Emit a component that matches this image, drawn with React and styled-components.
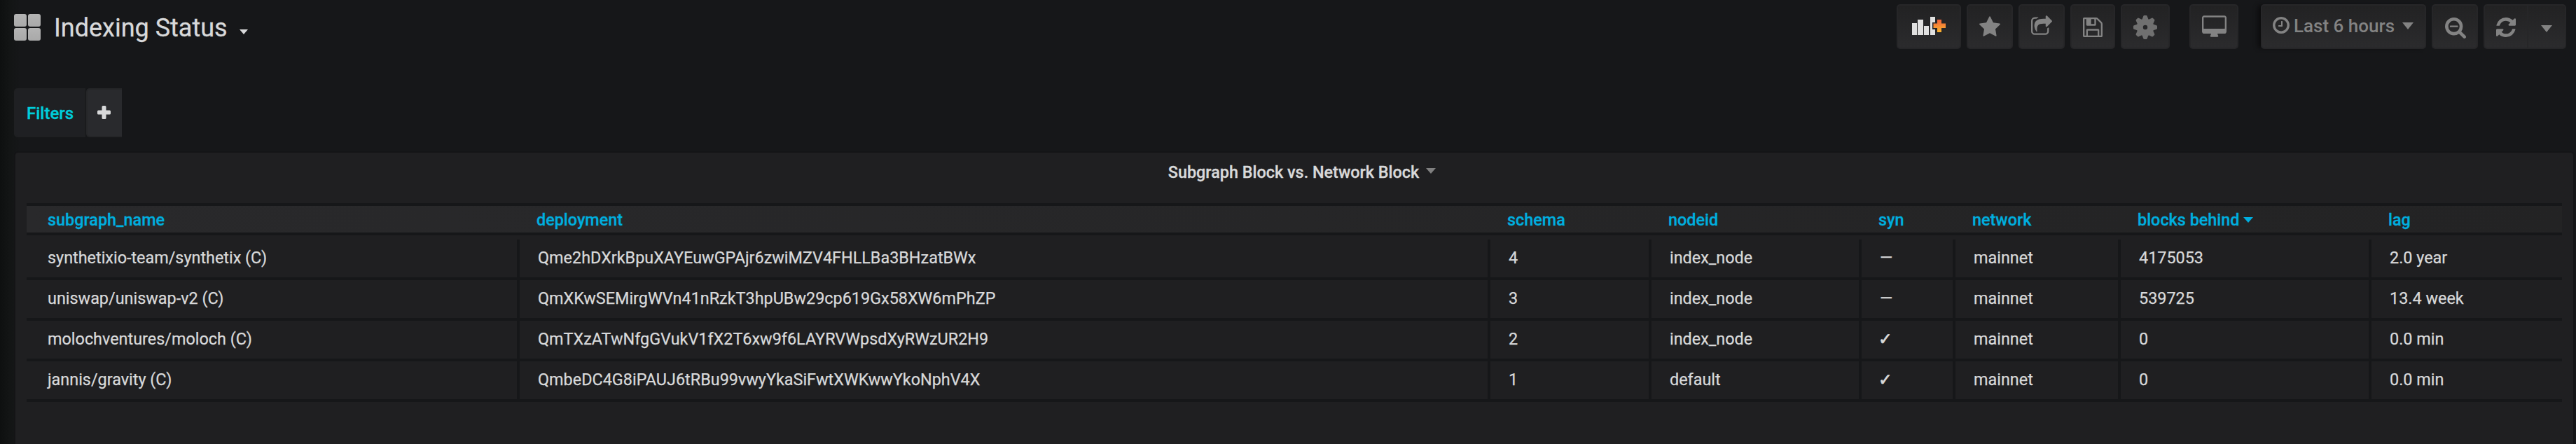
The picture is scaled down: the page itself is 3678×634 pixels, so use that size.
import React from "react";
import styled, { createGlobalStyle } from "styled-components";

const GlobalStyle = createGlobalStyle`
  *, *::before, *::after { box-sizing: border-box; }
  html, body { margin: 0; height: 100%; background: #161719; }
  #root { height: 100%; }
  body {
    font-family: Roboto, "Liberation Sans", sans-serif;
    font-size: 23.4px;
    color: #d8d9da;
    overflow: hidden;
  }
`;

const Page = styled.div`
  display: flex;
  flex-direction: column;
  height: 634px;
  overflow: hidden;
  background: linear-gradient(90deg, #0e1010 0, #131515 14px, #161719 30px);
`;

const Navbar = styled.header`
  display: flex;
  flex: none;
  align-items: flex-start;
  justify-content: space-between;
  height: 126px;
  padding: 6px 14px 0 20px;
`;

const TitleArea = styled.div`
  display: flex;
  align-items: center;
  padding-top: 4px;
`;

const Tiles = styled.div`
  display: grid;
  grid-template-columns: 18px 18px;
  grid-auto-rows: 18px;
  gap: 2px;
  margin-bottom: 2px;
`;

const Tile = styled.span`
  border-radius: 3px;
  background: linear-gradient(#b4b4b4, #a9a9a9);
`;

const Title = styled.h1`
  margin: 0 0 0 19px;
  font-size: 36px;
  line-height: 60px;
  font-weight: 400;
  white-space: nowrap;
  -webkit-text-stroke: 0.3px currentColor;
`;

const Caret = styled.i`
  flex: none;
  display: inline-block;
  width: 0;
  height: 0;
  margin: ${(p) => p.$m || "0"};
  border-style: solid;
  border-color: ${(p) => p.$color || "currentColor"} transparent transparent;
  border-width: ${(p) => p.$h}px ${(p) => p.$w / 2}px 0;
`;

const Toolbar = styled.div`
  display: flex;
  gap: 8px;
`;

const Button = styled.button`
  display: flex;
  align-items: flex-start;
  width: ${(p) => p.$w}px;
  height: 64px;
  margin: 0 0 0 ${(p) => p.$gap || 0}px;
  padding: ${(p) => p.$pad};
  border: 2px solid #262628;
  border-radius: ${(p) => p.$radius || "5px"};
  border-left-width: ${(p) => (p.$joined ? 0 : 2)}px;
  background: linear-gradient(#222223, #2b2b2d);
  box-shadow: ${(p) => (p.$shadow ? "-6px 0 6px -2px #0c0c0d" : "none")};
  color: #838383;
  font: 500 26px/26px Roboto, "Liberation Sans", sans-serif;
  white-space: nowrap;
`;

const ButtonGroup = styled.div`
  display: flex;
`;

const Glyph = styled.svg`
  flex: none;
  display: block;
  fill: ${(p) => p.$fill || "currentColor"};
`;

const TimeLabel = styled.span`
  margin: 0 11px 0 6px;
`;

const Filters = styled.div`
  display: flex;
  flex: none;
  gap: 1px;
  height: 70px;
  margin: 0 0 20px 20px;
`;

const FilterLabel = styled.div`
  width: 102px;
  padding: 0 0 0 16px;
  border: 2px solid #1f2022;
  border-radius: 5px 0 0 5px;
  background: #1f2023;
  color: #00cddb;
  font-size: 24px;
  line-height: 68px;
  font-weight: 500;
  -webkit-text-stroke: 0.3px currentColor;
`;

const AddFilter = styled.button`
  display: flex;
  align-items: flex-start;
  width: 51px;
  padding: 23px 0 0 14px;
  border: 2px solid #252628;
  border-right: 0;
  border-radius: 5px 0 0 5px;
  background: #292a2d;
  color: #d8d9da;
`;

const Panel = styled.section`
  flex: none;
  height: 430px;
  margin: 0 2px 0 20px;
  padding: 0 16px;
  border: 2px solid #141416;
  border-radius: 6px;
  background: #1f1f21;
`;

const PanelTitle = styled.h2`
  display: flex;
  justify-content: center;
  align-items: center;
  height: 56px;
  margin: 0 0 16px;
  padding-left: 22px;
  font-size: 23.4px;
  font-weight: 500;
  -webkit-text-stroke: 0.3px currentColor;
`;

const Row = styled.div`
  display: grid;
  grid-template-columns: 704px 1386px 230px 300px 134px 236px 358px 272px;
  border-bottom: 4px solid #161719;
`;

const HeadRow = styled(Row)`
  height: 46px;
  margin-bottom: 6px;
  border-top: 4px solid #161719;
  background: linear-gradient(90deg, #29292b, #232324);
`;

const HeadCell = styled.div`
  display: flex;
  align-items: center;
  padding: 1px 0 0 ${(p) => (p.$first ? 30 : 24)}px;
  color: #00aedf;
  font-weight: 500;
  -webkit-text-stroke: 0.3px currentColor;
`;

const Cell = styled.div`
  height: 54px;
  padding-left: ${(p) => (p.$first ? 30 : 26)}px;
  border-right: ${(p) => (p.$last ? 0 : 4)}px solid #161719;
  line-height: 53px;
  white-space: nowrap;
  -webkit-text-stroke: 0.25px currentColor;
`;

const Check = styled.span`
  margin-left: -2px;
  font-family: "DejaVu Sans", sans-serif;
  line-height: 1;
  -webkit-text-stroke: 0.8px currentColor;
`;

const ICONS = {
  star: ["64 32 1664 1587", "M1728 647q0 22-26 48l-363 354 86 500q1 7 1 20 0 21-10.5 35.5t-30.5 14.5q-19 0-40-12l-449-236-449 236q-22 12-40 12-21 0-31.5-14.5t-10.5-35.5q0-6 2-20l86-500-364-354q-25-27-25-48 0-37 56-46l502-73 225-455q19-41 49-41t49 41l225 455 502 73q56 9 56 46z"],
  share: ["64 0 1664 1536", "M1472 989v259q0 119-84.5 203.5t-203.5 84.5h-832q-119 0-203.5-84.5t-84.5-203.5v-832q0-119 84.5-203.5t203.5-84.5h255q13 0 22.5 9.5t9.5 22.5q0 27-26 32-77 26-133 60-10 4-16 4h-112q-66 0-113 47t-47 113v832q0 66 47 113t113 47h832q66 0 113-47t47-113v-214q0-19 18-29 28-13 54-37 16-16 35-8 21 9 21 29zm237-496l-384 384q-18 19-45 19-12 0-25-5-39-17-39-59v-192h-160q-323 0-438 131-119 137-74 473 3 23-20 34-8 2-12 2-16 0-26-13-10-14-21-31t-39.5-68.5-49.5-99.5-38.5-114-17.5-122q0-49 3.5-91t14-90 28-88 47-81.5 68.5-74 94.5-61.5 124.5-48.5 159.5-30.5 196.5-11h160v-192q0-42 39-59 13-5 25-5 26 0 45 19l384 384q19 19 19 45t-19 45z"],
  save: ["128 128 1536 1536", "M512 1536h768v-384h-768v384zm896 0h128v-896q0-14-10-38.5t-20-34.5l-281-281q-10-10-34-20t-39-10v416q0 40-28 68t-68 28h-576q-40 0-68-28t-28-68v-416h-128v1280h128v-416q0-40 28-68t68-28h832q40 0 68 28t28 68v416zm-384-928v-320q0-13-9.5-22.5t-22.5-9.5h-192q-13 0-22.5 9.5t-9.5 22.5v320q0 13 9.5 22.5t22.5 9.5h192q13 0 22.5-9.5t9.5-22.5zm640 32v928q0 40-28 68t-68 28h-1344q-40 0-68-28t-28-68v-1344q0-40 28-68t68-28h928q40 0 88 20t76 48l280 280q28 28 48 76t20 88z"],
  desktop: ["0 0 1920 1664", "M1792 992v-832q0-13-9.5-22.5t-22.5-9.5h-1600q-13 0-22.5 9.5t-9.5 22.5v832q0 13 9.5 22.5t22.5 9.5h1600q13 0 22.5-9.5t9.5-22.5zm128-832v1088q0 66-47 113t-113 47h-544q0 37 16 77.5t32 71 16 43.5q0 26-19 45t-45 19h-512q-26 0-45-19t-19-45q0-14 16-44t32-70 16-78h-544q-66 0-113-47t-47-113v-1088q0-66 47-113t113-47h1600q66 0 113 47t47 113z"],
  clock: ["128 128 1536 1536", "M1024 544v448q0 14-9 23t-23 9h-320q-14 0-23-9t-9-23v-64q0-14 9-23t23-9h224v-352q0-14 9-23t23-9h64q14 0 23 9t9 23zm416 352q0-148-73-273t-198-198-273-73-273 73-198 198-73 273 73 273 198 198 273 73 273-73 198-198 73-273zm224 0q0 209-103 385.5t-279.5 279.5-385.5 103-385.5-103-279.5-279.5-103-385.5 103-385.5 279.5-279.5 385.5-103 385.5 103 279.5 279.5 103 385.5z"],
  zoomOut: ["64 128 1664 1664", "M1088 800v64q0 13-9.5 22.5t-22.5 9.5h-576q-13 0-22.5-9.5t-9.5-22.5v-64q0-13 9.5-22.5t22.5-9.5h576q13 0 22.5 9.5t9.5 22.5zm128 32q0-185-131.5-316.5t-316.5-131.5-316.5 131.5-131.5 316.5 131.5 316.5 316.5 131.5 316.5-131.5 131.5-316.5zm512 832q0 53-37.5 90.5t-90.5 37.5q-54 0-90-38l-343-342q-179 124-399 124-143 0-273.5-55.5t-225-150-150-225-55.5-273.5 55.5-273.5 150-225 225-150 273.5-55.5 273.5 55.5 225 150 150 225 55.5 273.5q0 220-124 399l343 343q37 37 37 90z"],
  refresh: ["128 128 1536 1536", "M1639 1056q0 5-1 7-64 268-268 434.5t-478 166.5q-146 0-282.5-55t-243.5-157l-129 129q-19 19-45 19t-45-19-19-45v-448q0-26 19-45t45-19h448q26 0 45 19t19 45-19 45l-137 137q71 66 161 102t187 36q134 0 250-65t186-179q11-17 53-117 8-23 30-23h192q13 0 22.5 9.5t9.5 22.5zm25-800v448q0 26-19 45t-45 19h-448q-26 0-45-19t-19-45 19-45l138-138q-148-137-349-137-134 0-250 65t-186 179q-11 17-53 117-8 23-30 23h-199q-13 0-22.5-9.5t-9.5-22.5v-7q65-268 270-434.5t480-166.5q146 0 284 55.5t245 156.5l130-129q19-19 45-19t45 19 19 45z"],
};

const Icon = ({ name, w, h }) => (
  <Glyph width={w} height={h || w} viewBox={ICONS[name][0]}>
    <path d={ICONS[name][1]} />
  </Glyph>
);

const GearIcon = () => (
  <Glyph width="34" height="34" viewBox="-17 -17 34 34" $fill="#707070">
    {[0, 45, 90, 135, 180, 225, 270, 315].map((a) => (
      <path key={a} transform={`rotate(${a})`} d="M-4.6-11L-2.7-16Q-2.4-17-1.5-17H1.5Q2.4-17 2.7-16L4.6-11Z" />
    ))}
    <path fillRule="evenodd" d="M-12.3 0a12.3 12.3 0 1 0 24.6 0a12.3 12.3 0 1 0-24.6 0zM-3.2 0a3.2 3.2 0 1 0 6.4 0a3.2 3.2 0 1 0-6.4 0z" />
  </Glyph>
);

const AddPanelIcon = () => (
  <Glyph width="49" height="27" viewBox="0 0 49 27" $fill="#e0e0e0">
    <defs>
      <linearGradient id="plusFill" x1="0" y1="0" x2="0" y2="1">
        <stop offset="0" stopColor="#f0613a" />
        <stop offset="1" stopColor="#fbb52f" />
      </linearGradient>
    </defs>
    <path d="M0 9h7v17H0zM8 4h8v22H8zM17 13h7v13h-7zM26 0h7v26h-7z" />
    <path fill="#262627" d="M34.5 2.5h9.5v5.5h5v10h-5v5h-9.5v-5h-5.500v-10h5.500z" />
    <path fill="url(#plusFill)" d="M36 4h6v5.500h6v6.500h-6v6h-6v-6h-5.500v-6.500h5.500z" />
  </Glyph>
);

const COLUMNS = ["subgraph_name", "deployment", "schema", "nodeid", "syn", "network", "blocks behind", "lag"];

const ROWS = [
  ["synthetixio-team/synthetix (C)", "Qme2hDXrkBpuXAYEuwGPAjr6zwiMZV4FHLLBa3BHzatBWx", "4", "index_node", "—", "mainnet", "4175053", "2.0 year"],
  ["uniswap/uniswap-v2 (C)", "QmXKwSEMirgWVn41nRzkT3hpUBw29cp619Gx58XW6mPhZP", "3", "index_node", "—", "mainnet", "539725", "13.4 week"],
  ["molochventures/moloch (C)", "QmTXzATwNfgGVukV1fX2T6xw9f6LAYRVWpsdXyRWzUR2H9", "2", "index_node", "✓", "mainnet", "0", "0.0 min"],
  ["jannis/gravity (C)", "QmbeDC4G8iPAUJ6tRBu99vwyYkaSiFwtXWKwwYkoNphV4X", "1", "default", "✓", "mainnet", "0", "0.0 min"],
];

export default function App() {
  return (
    <Page>
      <GlobalStyle />
      <Navbar>
        <TitleArea>
          <Tiles>
            <Tile /><Tile /><Tile /><Tile />
          </Tiles>
          <Title>Indexing Status</Title>
          <Caret $w={12} $h={7} $m="11px 0 0 17px" />
        </TitleArea>
        <Toolbar>
          <Button $w={92} $pad="16px 0 0 20px" aria-label="Add panel"><AddPanelIcon /></Button>
          <Button $w={66} $pad="15px 0 0 16px" aria-label="Star"><Icon name="star" w={30} h={29} /></Button>
          <Button $w={66} $pad="14px 0 0 16px" aria-label="Share"><Icon name="share" w={30} h={28} /></Button>
          <Button $w={64} $pad="17px 0 0 16px" aria-label="Save"><Icon name="save" w={28} /></Button>
          <Button $w={70} $pad="14px 0 0 16px" aria-label="Settings"><GearIcon /></Button>
          <Button $w={70} $gap={20} $pad="14px 0 0 16px" aria-label="Cycle view"><Icon name="desktop" w={35} h={31} /></Button>
          <Button $w={236} $gap={24} $pad="16px 0 0 15px" $shadow>
            <Icon name="clock" w={24} />
            <TimeLabel>Last 6 hours</TimeLabel>
            <Caret $w={17} $h={10} $m="8px 0 0" />
          </Button>
          <Button $w={66} $pad="17px 0 0 17px" aria-label="Zoom out"><Icon name="zoomOut" w={30} /></Button>
          <ButtonGroup>
            <Button $w={64} $pad="17px 0 0 16px" $radius="5px 0 0 5px" aria-label="Refresh"><Icon name="refresh" w={28} /></Button>
            <Button $w={54} $pad="28px 0 0 18px" $radius="0 5px 5px 0" $joined aria-label="Refresh interval"><Caret $w={17} $h={10} /></Button>
          </ButtonGroup>
        </Toolbar>
      </Navbar>
      <Filters>
        <FilterLabel>Filters</FilterLabel>
        <AddFilter aria-label="Add filter">
          <Glyph width="19" height="19" viewBox="0 0 19 19">
            <path d="M8 0h3q1.500 0 1.500 1.500v5h5q1.500 0 1.500 1.500v3q0 1.500-1.500 1.500h-5v5q0 1.500-1.500 1.500h-3q-1.500 0-1.500-1.500v-5h-5q-1.500 0-1.500-1.500v-3q0-1.500 1.500-1.500h5v-5q0-1.500 1.500-1.500z" />
          </Glyph>
        </AddFilter>
      </Filters>
      <Panel>
        <PanelTitle>
          Subgraph Block vs. Network Block
          <Caret $w={14} $h={8} $m="0 0 4px 10px" $color="#808080" />
        </PanelTitle>
        <HeadRow>
          {COLUMNS.map((name, i) => (
            <HeadCell key={name} $first={i === 0}>
              {name}
              {name === "blocks behind" && <Caret $w={14} $h={8} $m="0 0 0 6px" />}
            </HeadCell>
          ))}
        </HeadRow>
        {ROWS.map((row) => (
          <Row key={row[0]}>
            {row.map((value, i) => (
              <Cell key={i} $first={i === 0} $last={i === row.length - 1}>
                {value === "✓" ? <Check>{value}</Check> : value}
              </Cell>
            ))}
          </Row>
        ))}
      </Panel>
    </Page>
  );
}
